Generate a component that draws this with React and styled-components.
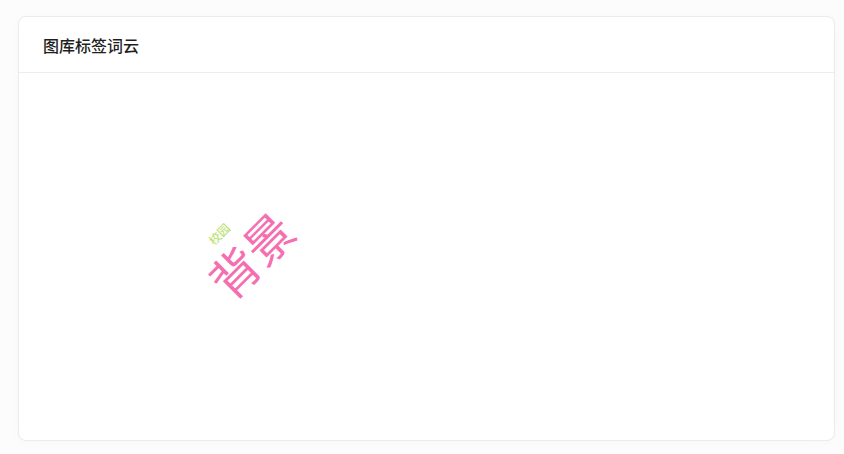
import React from "react";
import styled, { createGlobalStyle } from "styled-components";

const Global = createGlobalStyle`
  html, body { margin: 0; padding: 0; background: #fcfcfc; }
  body { font-family: "Noto Sans CJK SC", "Noto Sans", sans-serif; }
`;

const Page = styled.div`
  padding: 16px 9px 13px 18px;
  box-sizing: border-box;
  width: 844px;
  height: 454px;
`;

const Card = styled.section`
  width: 817px;
  height: 425px;
  box-sizing: border-box;
  background: #fff;
  border: 1px solid #ebebeb;
  border-radius: 8px;
  box-shadow: 0 2px 12px rgba(0, 0, 0, 0.02);
  display: flex;
  flex-direction: column;
  overflow: hidden;
`;

const Header = styled.header`
  height: 56px;
  flex: none;
  box-sizing: border-box;
  padding: 0 24px;
  display: flex;
  align-items: center;
  border-bottom: 1px solid #ededed;
`;

const Title = styled.h3`
  margin: 0;
  font-size: 16px;
  font-weight: 500;
  color: #1f1f1f;
`;

const Cloud = styled.div`
  position: relative;
  flex: 1;
`;

const Word = styled.span`
  position: absolute;
  left: ${(p) => p.$x}px;
  top: ${(p) => p.$y}px;
  transform: translate(-50%, -50%) rotate(${(p) => p.$rot}deg);
  font-size: ${(p) => p.$size}px;
  font-weight: 400;
  color: ${(p) => p.$color};
  white-space: nowrap;
  line-height: 1;
  font-family: "Noto Sans CJK SC", sans-serif;
`;

const words = [
  { text: "背景", x: 250, y: 254, size: 48, color: "#f56fb0", rot: -45 },
  { text: "校园", x: 219, y: 234, size: 12, color: "#b3e05f", rot: -45 },
];

export default function App() {
  return (
    <>
      <Global />
      <Page>
        <Card>
          <Header>
            <Title>图库标签词云</Title>
          </Header>
          <Cloud>
            {words.map((w) => (
              <Word
                key={w.text}
                $x={w.x - 19}
                $y={w.y - 73}
                $size={w.size}
                $color={w.color}
                $rot={w.rot}
              >
                {w.text}
              </Word>
            ))}
          </Cloud>
        </Card>
      </Page>
    </>
  );
}
